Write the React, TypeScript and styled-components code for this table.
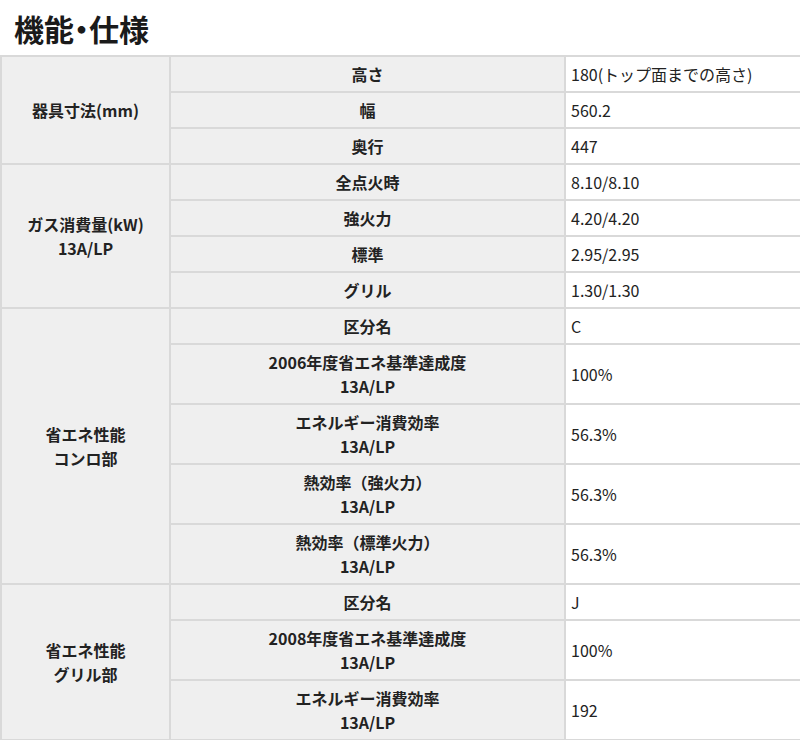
import styled, { createGlobalStyle } from 'styled-components'

const GlobalStyle = createGlobalStyle`
  body {
    margin: 0;
    background: #fff;
    color: #222;
    font-family: "Noto Sans CJK JP", "Noto Sans", sans-serif;
  }
`

const Page = styled.div`
  width: 800px;
  overflow: hidden;
`

const Heading = styled.h2`
  margin: 0;
  padding: 10px 14px 9px;
  font-size: 30px;
  font-weight: 700;
  line-height: 36px;
  font-feature-settings: 'palt';
  color: #1a1a1a;
`

const SpecTable = styled.table`
  width: 802px;
  border-collapse: collapse;
  table-layout: fixed;
  font-size: 16px;
  line-height: 24px;
`

const Cell = styled.td<{ $head?: boolean }>`
  border: 2px solid #d9d9d9;
  padding: ${(p) => (p.$head ? '5px 7px' : '5px 5px')};
  background: ${(p) => (p.$head ? '#efefef' : '#fff')};
  font-weight: ${(p) => (p.$head ? 700 : 400)};
  text-align: ${(p) => (p.$head ? 'center' : 'left')};
  vertical-align: middle;
`

type Item = { label: string[]; value: string }
type Group = { title: string[]; items: Item[] }

const groups: Group[] = [
  {
    title: ['器具寸法(mm)'],
    items: [
      { label: ['高さ'], value: '180(トップ面までの高さ)' },
      { label: ['幅'], value: '560.2' },
      { label: ['奥行'], value: '447' },
    ],
  },
  {
    title: ['ガス消費量(kW)', '13A/LP'],
    items: [
      { label: ['全点火時'], value: '8.10/8.10' },
      { label: ['強火力'], value: '4.20/4.20' },
      { label: ['標準'], value: '2.95/2.95' },
      { label: ['グリル'], value: '1.30/1.30' },
    ],
  },
  {
    title: ['省エネ性能', 'コンロ部'],
    items: [
      { label: ['区分名'], value: 'C' },
      { label: ['2006年度省エネ基準達成度', '13A/LP'], value: '100%' },
      { label: ['エネルギー消費効率', '13A/LP'], value: '56.3%' },
      { label: ['熱効率（強火力）', '13A/LP'], value: '56.3%' },
      { label: ['熱効率（標準火力）', '13A/LP'], value: '56.3%' },
    ],
  },
  {
    title: ['省エネ性能', 'グリル部'],
    items: [
      { label: ['区分名'], value: 'J' },
      { label: ['2008年度省エネ基準達成度', '13A/LP'], value: '100%' },
      { label: ['エネルギー消費効率', '13A/LP'], value: '192' },
    ],
  },
]

function Lines({ lines }: { lines: string[] }) {
  return (
    <>
      {lines.map((l, i) => (
        <span key={i}>
          {i > 0 && <br />}
          {l}
        </span>
      ))}
    </>
  )
}

export default function App() {
  return (
    <Page>
      <GlobalStyle />
      <Heading>機能・仕様</Heading>
      <SpecTable>
        <colgroup>
          <col style={{ width: 169 }} />
          <col style={{ width: 395 }} />
          <col />
        </colgroup>
        <tbody>
          {groups.map((g) =>
            g.items.map((it, i) => (
              <tr key={g.title.join() + i}>
                {i === 0 && (
                  <Cell $head rowSpan={g.items.length}>
                    <Lines lines={g.title} />
                  </Cell>
                )}
                <Cell $head>
                  <Lines lines={it.label} />
                </Cell>
                <Cell>{it.value}</Cell>
              </tr>
            ))
          )}
        </tbody>
      </SpecTable>
    </Page>
  )
}
